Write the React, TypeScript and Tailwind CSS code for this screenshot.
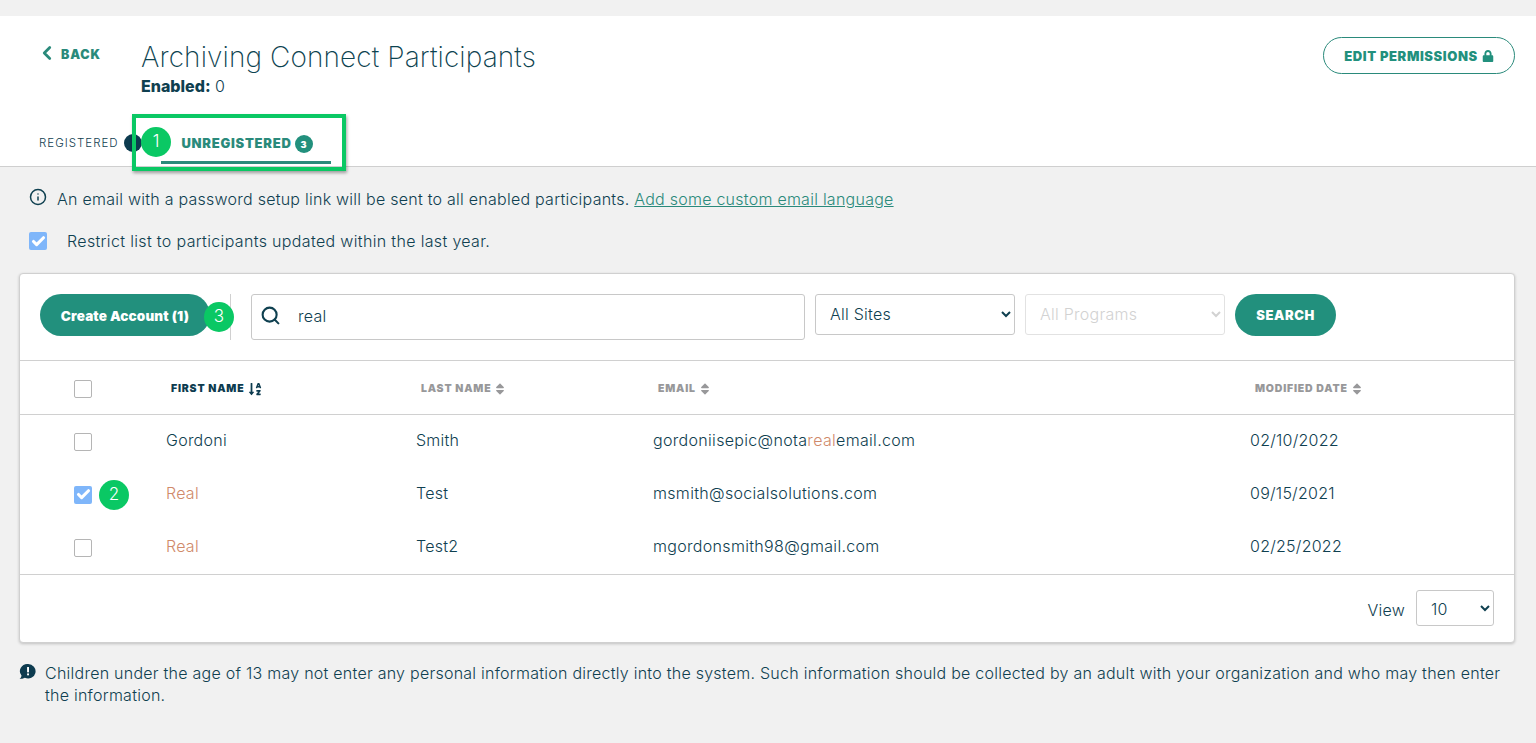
import { Check, ChevronLeft, Info, Search } from "lucide-react";
import { FaLock, FaSort, FaSortAlphaDown } from "react-icons/fa";

const rows = [
  { first: "Gordoni", last: "Smith", email: "gordoniisepic@nota", emailHit: "real", emailEnd: "email.com", date: "02/10/2022", hit: false, checked: false },
  { first: "Real", last: "Test", email: "msmith@socialsolutions.com", emailHit: "", emailEnd: "", date: "09/15/2021", hit: true, checked: true },
  { first: "Real", last: "Test2", email: "mgordonsmith98@gmail.com", emailHit: "", emailEnd: "", date: "02/25/2022", hit: true, checked: false },
];

function Box({ checked = false }: { checked?: boolean }) {
  return checked ? (
    <span className="flex h-[18px] w-[18px] items-center justify-center rounded-[2px] bg-[#7fb6fa]">
      <Check size={15} strokeWidth={5} className="text-white" />
    </span>
  ) : (
    <span className="block h-[18px] w-[18px] rounded-[2px] border border-[#b5b5b5] bg-white" />
  );
}

function Marker({ n, className }: { n: number; className: string }) {
  return (
    <span className={`absolute flex h-[30px] w-[30px] items-center justify-center rounded-full bg-[#0ac864] text-[17px] font-light text-white ${className}`}>
      {n}
    </span>
  );
}

function HeadCell({ label, dark = false }: { label: string; dark?: boolean }) {
  return (
    <div className={`flex items-center pl-[5px] text-[10.5px] font-black tracking-[0.8px] ${dark ? "gap-[4px] text-[#0d3b4f]" : "gap-[2px] text-[#98989a]"}`}>
      {label}
      {dark ? <FaSortAlphaDown size={14} /> : <FaSort size={14} />}
    </div>
  );
}

export default function App() {
  return (
    <div className="relative h-[743px] overflow-hidden bg-[#f1f1f1] pt-4 font-['Inter',sans-serif] text-[#0f4050]">
      {/* Page header and tabs */}
      <header className="h-[151px] border-b border-[#cfcfcf] bg-white">
        <div className="flex h-[99px] items-start justify-between pr-[21px] pl-[36px]">
          <div className="flex">
            <a className="flex w-[105px] items-center gap-[3px] self-start pt-[30px] text-[12.5px] font-black tracking-[0.8px] text-[#2a8a7b]">
              <ChevronLeft size={22} strokeWidth={3} className="-mt-1" />
              BACK
            </a>
            <div className="pt-[24px]">
              <h1 className="text-[28px] leading-[34px] font-extralight tracking-[0.1px] text-[#0d4350]">Archiving Connect Participants</h1>
              <p className="mt-[2px] text-[16px] leading-[20px] font-light">
                <b className="font-extrabold">Enabled:</b> 0
              </p>
            </div>
          </div>
          <button className="mt-[21px] flex h-[37px] w-[192px] items-center justify-center gap-1 rounded-full border border-[#2a8a7b] pt-[3px] text-[13px] font-black tracking-[0.6px] text-[#22907d]">
            EDIT PERMISSIONS <FaLock size={12} className="-mt-[2px]" />
          </button>
        </div>
        <nav className="flex h-[51px] items-start pl-[39px]">
          <div className="flex w-[122px] items-center gap-[5px] pt-[19px] text-[11.5px] leading-[14px] font-light tracking-[1px]">
            REGISTERED
            <span className="h-[18px] w-[18px] shrink-0 rounded-full bg-[#0d3b4f]" />
          </div>
          <div className="flex h-[49px] w-[170px] items-start justify-center gap-[3px] border-b-[3px] border-[#2a8a7b] pt-[20px] pl-[2px] text-[13px] leading-[17px] font-black tracking-[0.75px] text-[#2a8a7b]">
            UNREGISTERED
            <span className="flex h-[18px] w-[18px] items-center justify-center rounded-full bg-[#22907d] text-[9px] tracking-normal text-white">3</span>
          </div>
        </nav>
      </header>

      <main className="px-[19px]">
        <div className="flex items-center gap-[10px] pt-[20px] pl-[10px] text-[16px] leading-[24px] font-light tracking-[0.25px]">
          <Info size={18} strokeWidth={2} className="-mt-1" />
          <p>
            An email with a password setup link will be sent to all enabled participants.{" "}
            <a className="text-[#2a8a7b] underline">Add some custom email language</a>
          </p>
        </div>
        <div className="flex items-center gap-[20px] pt-[18px] pl-[10px] text-[16px] leading-[24px] font-light tracking-[0.34px]">
          <Box checked />
          <p>Restrict list to participants updated within the last year.</p>
        </div>

        {/* Participant card */}
        <section className="mt-[20px] h-[370px] w-[1496px] rounded-[4px] border border-[#d0d0d0] bg-white shadow-[0_1px_3px_rgba(0,0,0,0.2)]">
          <div className="flex h-[87px] items-start border-b border-[#d0d0d0] pt-[20px] pl-[20px]">
            <button className="h-[42px] w-[170px] rounded-full bg-[#22907d] pt-[3px] text-[13.5px] font-black tracking-[0.15px] text-white">
              Create Account (1)
            </button>
            <span className="mr-[20px] ml-[20px] h-[46px] w-px bg-[#d0d0d0]" />
            <div className="flex h-[46px] w-[554px] items-center rounded-[3px] border border-[#c8c8c8] pl-[8px] text-[16px] font-light tracking-[0.25px]">
              <Search size={21} strokeWidth={2.4} className="-mt-1" />
              <span className="ml-[17px] -mt-[3px]">real</span>
            </div>
            <select className="ml-[10px] h-[41px] w-[200px] rounded-[3px] border border-[#c8c8c8] bg-white pb-[2px] pl-[10px] text-[16px] font-light tracking-[0.25px]">
              <option>All Sites</option>
            </select>
            <select disabled className="ml-[10px] h-[41px] w-[200px] rounded-[3px] border border-[#e2e2e2] bg-white pb-[2px] pl-[10px] text-[16px] font-light tracking-[0.25px] text-[#d2d2d2]">
              <option>All Programs</option>
            </select>
            <button className="ml-[10px] h-[42px] w-[101px] rounded-full bg-[#22907d] pt-[2px] text-[13px] font-black tracking-[0.6px] text-white">
              SEARCH
            </button>
          </div>

          <div className="grid h-[54px] grid-cols-[146px_250px_237px_597px_1fr] items-center border-b border-[#d0d0d0] pt-[2px]">
            <div className="pl-[54px]"><Box /></div>
            <HeadCell label="FIRST NAME" dark />
            <HeadCell label="LAST NAME" />
            <HeadCell label="EMAIL" />
            <HeadCell label="MODIFIED DATE" />
          </div>

          <div className="h-[160px] border-b border-[#d0d0d0]">
            {rows.map((r) => (
              <div key={r.email} className="grid h-[53px] grid-cols-[146px_250px_237px_597px_1fr] items-center text-[16px] font-light tracking-[0.25px]">
                <div className="pl-[54px]"><Box checked={r.checked} /></div>
                <div className={r.hit ? "pb-[3px] text-[#d08a6a]" : "pb-[3px]"}>{r.first}</div>
                <div className="pb-[3px]">{r.last}</div>
                <div className="pb-[3px] tracking-[0.32px]">
                  {r.email}
                  <span className="text-[#d08a6a]">{r.emailHit}</span>
                  {r.emailEnd}
                </div>
                <div className="pb-[3px]">{r.date}</div>
              </div>
            ))}
          </div>

          <div className="flex items-center justify-end gap-[11px] pt-[15px] pr-[20px] text-[16px] font-light tracking-[0.25px]">
            <span className="pt-[3px]">View</span>
            <select className="h-[36px] w-[78px] rounded-[3px] border border-[#c8c8c8] bg-white pt-[2px] pl-[10px]">
              <option>10</option>
            </select>
          </div>
        </section>

        <div className="flex gap-[9px] pt-[19px] text-[16px] leading-[22px] font-light tracking-[0.25px]">
          <svg viewBox="0 0 16 16" className="mt-[1px] h-[17px] w-[17px] shrink-0">
            <path d="M8.5 1a7 6.8 0 1 1-3 12.9C4 14.8 2.2 15 .6 15c1-.8 1.6-1.8 1.8-3A7 6.8 0 0 1 8.500 1z" fill="#0d3b4f" />
            <rect x="7.600" y="3.800" width="1.800" height="5" fill="#fff" />
            <rect x="7.600" y="9.800" width="1.800" height="1.800" fill="#fff" />
          </svg>
          <p>
            Children under the age of 13 may not enter any personal information directly into the system. Such information should be collected by an adult with your organization and who may then enter the information.
          </p>
        </div>
      </main>

      {/* Tutorial annotations drawn over the page */}
      <span className="absolute top-[114px] left-[132px] h-[57px] w-[214px] border-[4px] border-[#0ac864] shadow-[1px_2px_3px_rgba(0,0,0,0.35)]" />
      <Marker n={1} className="top-[127px] left-[141px]" />
      <Marker n={2} className="top-[480px] left-[99px]" />
      <Marker n={3} className="top-[302px] left-[204px]" />
    </div>
  );
}
